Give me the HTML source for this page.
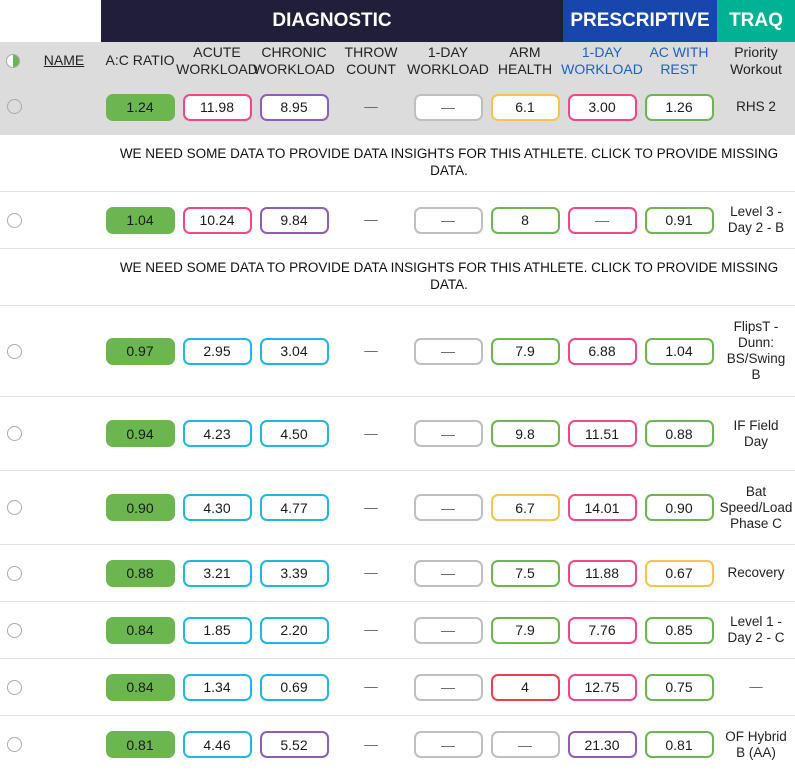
<!DOCTYPE html>
<html><head><meta charset="utf-8"><style>
*{box-sizing:border-box;margin:0;padding:0}
body{width:795px;height:772px;overflow:hidden;background:#fff;font-family:"Liberation Sans",sans-serif;font-size:13.5px;color:#222;position:relative}
.band{position:absolute;top:0;height:42px;color:#fff;font-weight:bold;font-size:19px;display:flex;align-items:center;justify-content:center}
.hdr{position:absolute;top:42px;left:0;width:795px;height:37px;background:#dcdcdc}
.row{position:absolute;left:0;width:795px;border-bottom:1.5px solid #e2e2e2}
.c{position:absolute;top:0;height:100%;display:flex;align-items:center;justify-content:center;text-align:center;line-height:16px}
.h{font-size:14px;line-height:17px;color:#222}
.blue{color:#1e5fc6}
.p{width:69px;height:27px;border:2px solid;border-radius:7px;display:flex;align-items:center;justify-content:center;background:#fff;font-size:14px;color:#1a1a1a}
.g{background:#6cb650;border-color:#6cb650;color:#1a1a1a}
.pk{border-color:#f4448a}.pu{border-color:#8e5db8}.cy{border-color:#1fb7e2}.gr{border-color:#bfbfbf}.ye{border-color:#f9c24d}.gn{border-color:#6cb650}.rd{border-color:#e8404e}
.radio{position:absolute;left:7px;width:15px;height:15px;border:1px solid #aaa;border-radius:50%;background:#fff}
.msg{position:absolute;left:114px;top:10px;font-size:13.5px;line-height:17px;color:#111;width:670px;text-align:center}
.dash{color:#666}
</style></head><body>
<div class="band" style="left:101px;width:462px;background:#211e3a">DIAGNOSTIC</div>
<div class="band" style="left:563px;width:154px;background:#1746ad">PRESCRIPTIVE</div>
<div class="band" style="left:717px;width:78px;background:#00b294">TRAQ</div>
<div class="hdr">
 <div style="position:absolute;left:6px;top:12px;width:14px;height:14px;border-radius:50%;background:linear-gradient(90deg,#fff 50%,#6cb650 50%);border:1px solid #aaa"></div>
 <div class="c h" style="left:35px;width:58px;text-decoration:underline;color:#222">NAME</div>
 <div class="c h" style="left:101px;width:78px">A:C RATIO</div>
 <div class="c h" style="left:178px;width:78px">ACUTE<br>WORKLOAD</div>
 <div class="c h" style="left:255px;width:78px">CHRONIC<br>WORKLOAD</div>
 <div class="c h" style="left:332px;width:78px">THROW<br>COUNT</div>
 <div class="c h" style="left:409px;width:78px">1-DAY<br>WORKLOAD</div>
 <div class="c h" style="left:486px;width:78px">ARM<br>HEALTH</div>
 <div class="c h blue" style="left:563px;width:78px">1-DAY<br>WORKLOAD</div>
 <div class="c h blue" style="left:640px;width:78px">AC WITH<br>REST</div>
 <div class="c h" style="left:719px;width:74px">Priority<br>Workout</div>
</div>

<div class="row" style="top:79px;height:56px;background:#dcdcdc;border:none">
 <div class="radio" style="top:20px;background:#dcdcdc"></div>
 <div class="c" style="left:101px;width:78px"><div class="p g">1.24</div></div>
 <div class="c" style="left:178px;width:78px"><div class="p pk">11.98</div></div>
 <div class="c" style="left:255px;width:78px"><div class="p pu">8.95</div></div>
 <div class="c dash" style="left:332px;width:78px">—</div>
 <div class="c" style="left:409px;width:78px"><div class="p gr dash">—</div></div>
 <div class="c" style="left:486px;width:78px"><div class="p ye">6.1</div></div>
 <div class="c" style="left:563px;width:78px"><div class="p pk">3.00</div></div>
 <div class="c" style="left:640px;width:78px"><div class="p gn">1.26</div></div>
 <div class="c" style="left:719px;width:74px">RHS 2</div>
</div>

<div class="row" style="top:135px;height:57px"><div class="msg">WE NEED SOME DATA TO PROVIDE DATA INSIGHTS FOR THIS ATHLETE. CLICK TO PROVIDE MISSING DATA.</div></div>

<div class="row" style="top:192px;height:57px">
 <div class="radio" style="top:21px"></div>
 <div class="c" style="left:101px;width:78px"><div class="p g">1.04</div></div>
 <div class="c" style="left:178px;width:78px"><div class="p pk">10.24</div></div>
 <div class="c" style="left:255px;width:78px"><div class="p pu">9.84</div></div>
 <div class="c dash" style="left:332px;width:78px">—</div>
 <div class="c" style="left:409px;width:78px"><div class="p gr dash">—</div></div>
 <div class="c" style="left:486px;width:78px"><div class="p gn">8</div></div>
 <div class="c" style="left:563px;width:78px"><div class="p pk dash">—</div></div>
 <div class="c" style="left:640px;width:78px"><div class="p gn">0.91</div></div>
 <div class="c" style="left:719px;width:74px">Level 3 -<br>Day 2 - B</div>
</div>

<div class="row" style="top:249px;height:57px"><div class="msg">WE NEED SOME DATA TO PROVIDE DATA INSIGHTS FOR THIS ATHLETE. CLICK TO PROVIDE MISSING DATA.</div></div>

<div class="row" style="top:306px;height:91px">
 <div class="radio" style="top:38px"></div>
 <div class="c" style="left:101px;width:78px"><div class="p g">0.97</div></div>
 <div class="c" style="left:178px;width:78px"><div class="p cy">2.95</div></div>
 <div class="c" style="left:255px;width:78px"><div class="p cy">3.04</div></div>
 <div class="c dash" style="left:332px;width:78px">—</div>
 <div class="c" style="left:409px;width:78px"><div class="p gr dash">—</div></div>
 <div class="c" style="left:486px;width:78px"><div class="p gn">7.9</div></div>
 <div class="c" style="left:563px;width:78px"><div class="p pk">6.88</div></div>
 <div class="c" style="left:640px;width:78px"><div class="p gn">1.04</div></div>
 <div class="c" style="left:719px;width:74px">FlipsT -<br>Dunn:<br>BS/Swing<br>B</div>
</div>

<div class="row" style="top:397px;height:74px">
 <div class="radio" style="top:29px"></div>
 <div class="c" style="left:101px;width:78px"><div class="p g">0.94</div></div>
 <div class="c" style="left:178px;width:78px"><div class="p cy">4.23</div></div>
 <div class="c" style="left:255px;width:78px"><div class="p cy">4.50</div></div>
 <div class="c dash" style="left:332px;width:78px">—</div>
 <div class="c" style="left:409px;width:78px"><div class="p gr dash">—</div></div>
 <div class="c" style="left:486px;width:78px"><div class="p gn">9.8</div></div>
 <div class="c" style="left:563px;width:78px"><div class="p pk">11.51</div></div>
 <div class="c" style="left:640px;width:78px"><div class="p gn">0.88</div></div>
 <div class="c" style="left:719px;width:74px">IF Field<br>Day</div>
</div>

<div class="row" style="top:471px;height:74px">
 <div class="radio" style="top:29px"></div>
 <div class="c" style="left:101px;width:78px"><div class="p g">0.90</div></div>
 <div class="c" style="left:178px;width:78px"><div class="p cy">4.30</div></div>
 <div class="c" style="left:255px;width:78px"><div class="p cy">4.77</div></div>
 <div class="c dash" style="left:332px;width:78px">—</div>
 <div class="c" style="left:409px;width:78px"><div class="p gr dash">—</div></div>
 <div class="c" style="left:486px;width:78px"><div class="p ye">6.7</div></div>
 <div class="c" style="left:563px;width:78px"><div class="p pk">14.01</div></div>
 <div class="c" style="left:640px;width:78px"><div class="p gn">0.90</div></div>
 <div class="c" style="left:716px;width:80px;white-space:nowrap">Bat<br>Speed/Load<br>Phase C</div>
</div>

<div class="row" style="top:545px;height:57px">
 <div class="radio" style="top:21px"></div>
 <div class="c" style="left:101px;width:78px"><div class="p g">0.88</div></div>
 <div class="c" style="left:178px;width:78px"><div class="p cy">3.21</div></div>
 <div class="c" style="left:255px;width:78px"><div class="p cy">3.39</div></div>
 <div class="c dash" style="left:332px;width:78px">—</div>
 <div class="c" style="left:409px;width:78px"><div class="p gr dash">—</div></div>
 <div class="c" style="left:486px;width:78px"><div class="p gn">7.5</div></div>
 <div class="c" style="left:563px;width:78px"><div class="p pk">11.88</div></div>
 <div class="c" style="left:640px;width:78px"><div class="p ye">0.67</div></div>
 <div class="c" style="left:719px;width:74px">Recovery</div>
</div>

<div class="row" style="top:602px;height:57px">
 <div class="radio" style="top:21px"></div>
 <div class="c" style="left:101px;width:78px"><div class="p g">0.84</div></div>
 <div class="c" style="left:178px;width:78px"><div class="p cy">1.85</div></div>
 <div class="c" style="left:255px;width:78px"><div class="p cy">2.20</div></div>
 <div class="c dash" style="left:332px;width:78px">—</div>
 <div class="c" style="left:409px;width:78px"><div class="p gr dash">—</div></div>
 <div class="c" style="left:486px;width:78px"><div class="p gn">7.9</div></div>
 <div class="c" style="left:563px;width:78px"><div class="p pk">7.76</div></div>
 <div class="c" style="left:640px;width:78px"><div class="p gn">0.85</div></div>
 <div class="c" style="left:719px;width:74px">Level 1 -<br>Day 2 - C</div>
</div>

<div class="row" style="top:659px;height:57px">
 <div class="radio" style="top:21px"></div>
 <div class="c" style="left:101px;width:78px"><div class="p g">0.84</div></div>
 <div class="c" style="left:178px;width:78px"><div class="p cy">1.34</div></div>
 <div class="c" style="left:255px;width:78px"><div class="p cy">0.69</div></div>
 <div class="c dash" style="left:332px;width:78px">—</div>
 <div class="c" style="left:409px;width:78px"><div class="p gr dash">—</div></div>
 <div class="c" style="left:486px;width:78px"><div class="p rd">4</div></div>
 <div class="c" style="left:563px;width:78px"><div class="p pk">12.75</div></div>
 <div class="c" style="left:640px;width:78px"><div class="p gn">0.75</div></div>
 <div class="c dash" style="left:719px;width:74px">—</div>
</div>

<div class="row" style="top:716px;height:57px;border:none">
 <div class="radio" style="top:21px"></div>
 <div class="c" style="left:101px;width:78px"><div class="p g">0.81</div></div>
 <div class="c" style="left:178px;width:78px"><div class="p cy">4.46</div></div>
 <div class="c" style="left:255px;width:78px"><div class="p pu">5.52</div></div>
 <div class="c dash" style="left:332px;width:78px">—</div>
 <div class="c" style="left:409px;width:78px"><div class="p gr dash">—</div></div>
 <div class="c" style="left:486px;width:78px"><div class="p gr dash">—</div></div>
 <div class="c" style="left:563px;width:78px"><div class="p pu">21.30</div></div>
 <div class="c" style="left:640px;width:78px"><div class="p gn">0.81</div></div>
 <div class="c" style="left:719px;width:74px">OF Hybrid<br>B (AA)</div>
</div>
</body></html>
